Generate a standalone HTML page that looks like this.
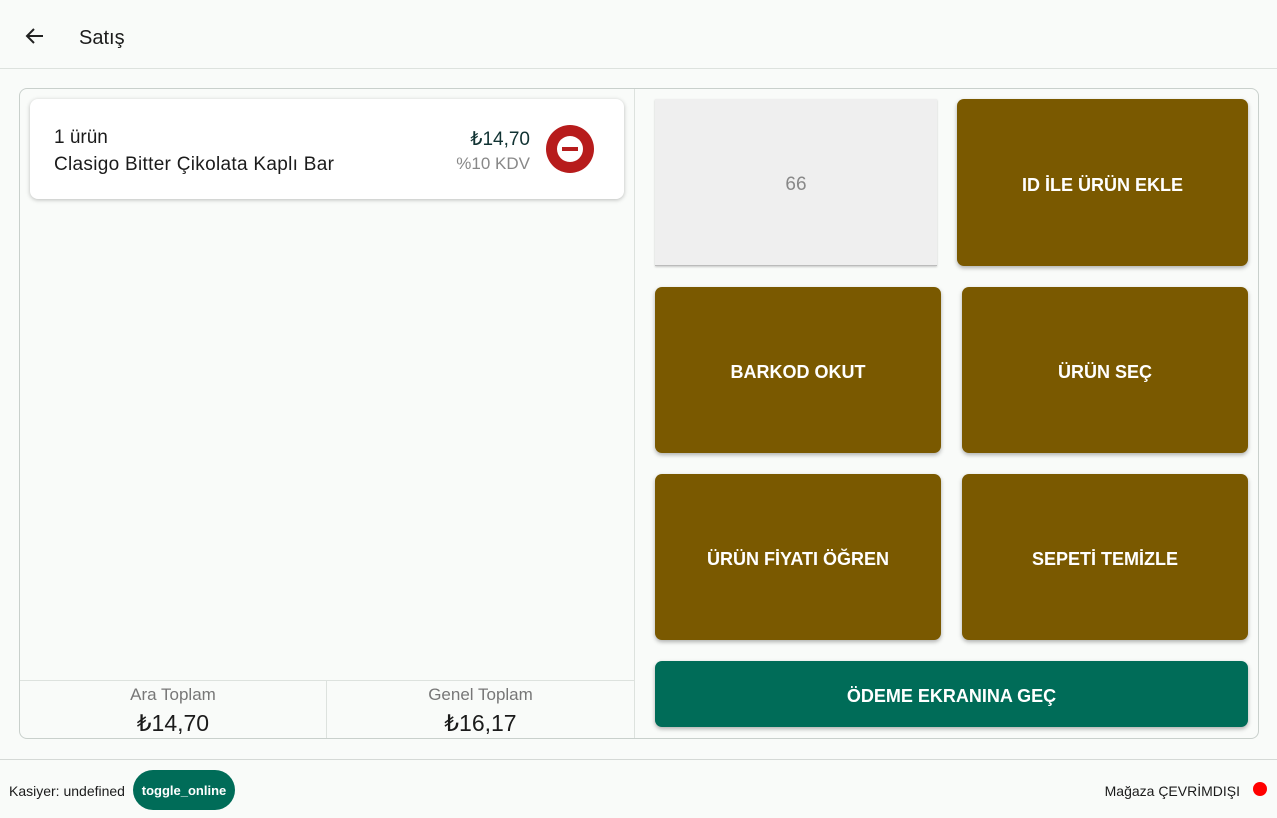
<!DOCTYPE html>
<html><head><meta charset="utf-8"><style>
*{box-sizing:border-box;margin:0;padding:0}
body{width:1277px;height:818px;background:#f9fbf9;font-family:"Liberation Sans",sans-serif;position:relative;overflow:hidden;color:#1b1b1b}
.abs{position:absolute}
.btn{position:absolute;background:#7a5900;color:#fff;border-radius:7px;display:flex;align-items:center;justify-content:center;font-size:18px;font-weight:bold;box-shadow:0 2px 4px rgba(0,0,0,.3);padding-top:5px}
</style></head><body>
<div class="abs" style="left:0;top:0;width:1277px;height:69px;border-bottom:1px solid #dde2de"></div>
<svg class="abs" style="left:24px;top:26px" width="22" height="20" viewBox="0 0 22 20"><path d="M19 10H4M10 3L3 10l7 7" stroke="#222" stroke-width="2" fill="none"/></svg>
<div class="abs" style="left:79px;top:27px;font-size:20px">Satış</div>
<div class="abs" style="left:19px;top:88px;width:1240px;height:651px;border:1px solid #c9d0cc;border-radius:8px"></div>
<div class="abs" style="left:634px;top:89px;width:1px;height:649px;background:#dde2de"></div>
<div class="abs" style="left:20px;top:680px;width:614px;height:1px;background:#dde2de"></div>
<div class="abs" style="left:326px;top:681px;width:1px;height:57px;background:#dde2de"></div>
<div class="abs" style="left:30px;top:99px;width:594px;height:100px;background:#fff;border-radius:8px;box-shadow:0 1px 4px rgba(0,0,0,.25)"></div>
<div class="abs" style="left:54px;top:127px;font-size:19px">1 ürün</div>
<div class="abs" style="left:54px;top:154px;font-size:19px;letter-spacing:0.3px">Clasigo Bitter Çikolata Kaplı Bar</div>
<div class="abs" style="left:430px;top:128px;width:100px;text-align:right;font-size:19px;color:#133">₺14,70</div>
<div class="abs" style="left:430px;top:154px;width:100px;text-align:right;font-size:17px;color:#888">%10 KDV</div>
<div class="abs" style="left:546px;top:125px;width:48px;height:48px;border-radius:50%;background:#b71c1c"></div>
<div class="abs" style="left:557px;top:136px;width:26px;height:26px;border-radius:50%;background:#fff"></div>
<div class="abs" style="left:562px;top:147px;width:16px;height:4px;background:#b71c1c"></div>
<div class="abs" style="left:20px;top:685px;width:306px;text-align:center;font-size:17px;color:#777">Ara Toplam</div>
<div class="abs" style="left:20px;top:710px;width:306px;text-align:center;font-size:23px">₺14,70</div>
<div class="abs" style="left:327px;top:685px;width:307px;text-align:center;font-size:17px;color:#777">Genel Toplam</div>
<div class="abs" style="left:327px;top:710px;width:307px;text-align:center;font-size:23px">₺16,17</div>
<div class="abs" style="left:655px;top:99px;width:282px;height:167px;background:#efefef;border-bottom:1px solid #bbb;display:flex;align-items:center;justify-content:center;font-size:19px;color:#888;box-shadow:0 1px 2px rgba(0,0,0,.2);padding-top:5px">66</div>
<div class="btn" style="left:957px;top:99px;width:291px;height:167px">ID İLE ÜRÜN EKLE</div>
<div class="btn" style="left:655px;top:287px;width:286px;height:166px">BARKOD OKUT</div>
<div class="btn" style="left:962px;top:287px;width:286px;height:166px">ÜRÜN SEÇ</div>
<div class="btn" style="left:655px;top:474px;width:286px;height:166px">ÜRÜN FİYATI ÖĞREN</div>
<div class="btn" style="left:962px;top:474px;width:286px;height:166px">SEPETİ TEMİZLE</div>
<div class="btn" style="left:655px;top:661px;width:593px;height:66px;background:#006c58">ÖDEME EKRANINA GEÇ</div>
<div class="abs" style="left:0;top:759px;width:1277px;height:1px;background:#d5d9d6"></div>
<div class="abs" style="left:9px;top:783px;font-size:14px">Kasiyer: undefined</div>
<div class="abs" style="left:133px;top:770px;width:102px;height:40px;border-radius:20px;background:#006c58;color:#fff;font-size:13px;font-weight:bold;display:flex;align-items:center;justify-content:center">toggle_online</div>
<div class="abs" style="left:1040px;top:783px;width:200px;text-align:right;font-size:14px">Mağaza ÇEVRİMDIŞI</div>
<div class="abs" style="left:1253px;top:782px;width:14px;height:14px;border-radius:50%;background:#f00"></div>
</body></html>
